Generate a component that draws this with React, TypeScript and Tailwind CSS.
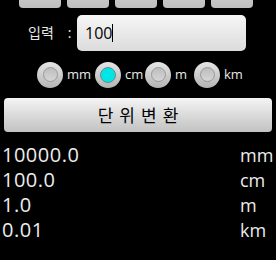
const units = ["mm", "cm", "m", "km"];
const results = [
  { value: "10000.0", unit: "mm" },
  { value: "100.0", unit: "cm" },
  { value: "1.0", unit: "m" },
  { value: "0.01", unit: "km" },
];

function Radio({ checked }: { checked: boolean }) {
  return (
    <div className="w-[26px] h-[26px] rounded-full bg-gradient-to-b from-[#e6e6e6] to-[#b4b4b4] flex items-center justify-center shrink-0">
      <div
        className={
          checked
            ? "w-[16px] h-[16px] rounded-full bg-[#00e6e6] border border-[#6a8a8a]"
            : "w-[15px] h-[15px] rounded-full bg-gradient-to-b from-[#bdbdbd] to-[#d6d6d6] border border-[#9a9a9a]"
        }
      />
    </div>
  );
}

export default function App() {
  return (
    <div
      className="w-[276px] h-[260px] bg-black overflow-hidden"
      style={{ fontFamily: "'Open Sans', 'Noto Sans CJK KR', sans-serif" }}
    >
      {/* Top buttons (cut off) */}
      <div className="flex gap-[6px] pl-[19px] -mt-[32px]">
        {[0, 1, 2, 3, 4].map((i) => (
          <div
            key={i}
            className="w-[42px] h-[40px] rounded-[4px] bg-gradient-to-b from-[#e8e8e8] to-[#bdbdbd]"
          />
        ))}
      </div>

      {/* Input row */}
      <div className="flex items-center mt-[7px]">
        <div className="w-[77px] pl-[28px] flex items-center text-[14px] text-[#e8e8e8] leading-none">
          <span>입력</span>
          <span className="ml-[14px]">:</span>
        </div>
        <div className="w-[169px] h-[36px] rounded-[5px] bg-gradient-to-b from-[#f6f6f6] to-[#dcdcdc] flex items-center pl-[8px]">
          <span className="text-[16px] text-black leading-none">100</span>
          <span className="w-[1px] h-[18px] bg-black" />
        </div>
      </div>

      {/* Unit radios */}
      <div className="flex items-center pl-[37px] mt-[10px] h-[27px]">
        {units.map((u, i) => (
          <div
            key={u}
            className={
              "flex items-center gap-[4px] " +
              (i === 0 ? "w-[58px]" : i === 1 ? "w-[50px]" : i === 2 ? "w-[49px]" : "")
            }
          >
            <Radio checked={u === "cm"} />
            <span className="text-[13px] text-[#e8e8e8] leading-none">{u}</span>
          </div>
        ))}
      </div>

      {/* Convert button */}
      <div className="px-[4px] mt-[10px]">
        <div className="h-[34px] rounded-[4px] bg-gradient-to-b from-[#f4f4f4] to-[#c2c2c2] flex items-center justify-center">
          <span className="text-[17px] text-black tracking-[6px] pl-[6px] leading-none">단위변환</span>
        </div>
      </div>

      {/* Results */}
      <div className="flex flex-col mt-[10px] pl-[2px]">
        {results.map((r) => (
          <div key={r.unit} className="flex justify-between h-[25px] items-center text-[#ececec] leading-none">
            <span className="text-[20px] tracking-[0.5px]">{r.value}</span>
            <span className="w-[36px] text-[18px]">{r.unit}</span>
          </div>
        ))}
      </div>
    </div>
  );
}
